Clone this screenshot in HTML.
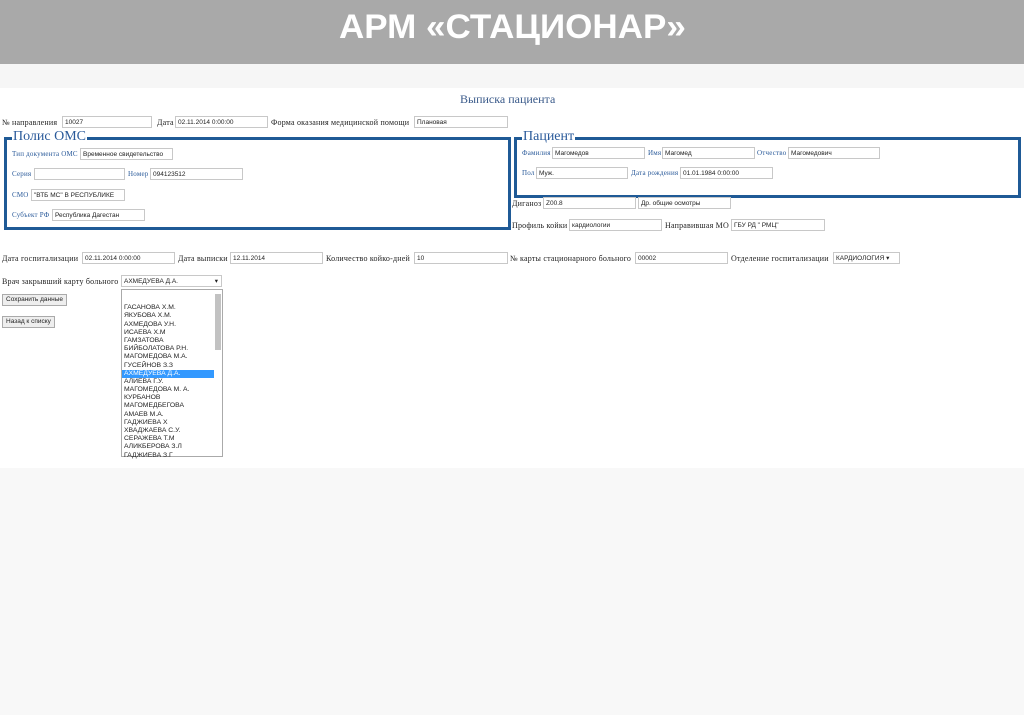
<!DOCTYPE html>
<html><head><meta charset="utf-8"><style>
*{margin:0;padding:0;box-sizing:border-box}
body{width:1024px;height:715px;position:relative;overflow:hidden;background:#f8f8f8;font-family:"Liberation Serif","DejaVu Serif",serif;}
.hdr{position:absolute;left:0;top:0;width:1024px;height:64px;background:#a9a9a9;color:#fff;font-family:"Liberation Sans",sans-serif;font-weight:bold;font-size:34px;text-align:center;line-height:54px;}
.hdr span{display:inline-block;transform:scaleX(1.03)}
.band{position:absolute;left:0;top:64px;width:1024px;height:24px;background:#f6f6f6}
.shot{position:absolute;left:0;top:88px;width:1024px;height:380px;background:#fff}
.a{position:absolute;font-size:8px;letter-spacing:0.2px;color:#222;white-space:nowrap;line-height:9px}
.b{color:#2a5a9a;font-size:7px;letter-spacing:0.2px}
.i{position:absolute;height:12px;border:1px solid #c8c8c8;background:#fff;font-family:"Liberation Sans",sans-serif;font-size:6.5px;line-height:11px;padding-left:2px;color:#222;white-space:nowrap;overflow:hidden}
.fs{position:absolute;border:3px solid #1f5a96}
.lg{position:absolute;background:#fff;font-size:14px;color:#2a5a9a;line-height:14px;padding:0 1px}
.btn{position:absolute;height:12px;border:1px solid #aaa;background:#eee;font-family:"Liberation Sans",sans-serif;font-size:6.5px;line-height:10px;padding:0 3px;color:#222}
.lb{position:absolute;left:121px;top:289px;width:102px;height:168px;border:1px solid #aaa;background:#fff;font-family:"Liberation Sans",sans-serif;font-size:6.8px;color:#222}
.lb div{height:8.2px;line-height:8.2px;padding-left:2px;width:92px}
</style></head><body>
<div class="hdr"><span>АРМ «СТАЦИОНАР»</span></div>
<div class="band"></div>
<div class="shot"></div>
<div class="a" style="left:460px;top:92px;font-size:12px;line-height:14px;letter-spacing:0;color:#3a5a8a">Выписка пациента</div>

<div class="a" style="left:2px;top:118px">№ направления</div><div class="i" style="left:62px;top:116px;width:90px">10027</div>
<div class="a" style="left:157px;top:118px">Дата</div><div class="i" style="left:175px;top:116px;width:93px">02.11.2014 0:00:00</div>
<div class="a" style="left:271px;top:118px">Форма оказания медицинской помощи</div><div class="i" style="left:414px;top:116px;width:94px">Плановая</div>

<div class="fs" style="left:4px;top:137px;width:507px;height:93px"></div>
<div class="lg" style="left:12px;top:130px">Полис ОМС</div>
<div class="a b" style="left:12px;top:150px">Тип документа ОМС</div><div class="i" style="left:80px;top:148px;width:93px">Временное свидетельство</div>
<div class="a b" style="left:12px;top:170px">Серия</div><div class="i" style="left:34px;top:168px;width:91px"></div>
<div class="a b" style="left:128px;top:170px">Номер</div><div class="i" style="left:150px;top:168px;width:93px">094123512</div>
<div class="a b" style="left:12px;top:191px">СМО</div><div class="i" style="left:31px;top:189px;width:94px">"ВТБ МС" В РЕСПУБЛИКЕ</div>
<div class="a b" style="left:12px;top:211px">Субъект РФ</div><div class="i" style="left:52px;top:209px;width:93px">Республика Дагестан</div>

<div class="fs" style="left:514px;top:137px;width:507px;height:61px"></div>
<div class="lg" style="left:522px;top:130px">Пациент</div>
<div class="a b" style="left:522px;top:149px">Фамилия</div><div class="i" style="left:552px;top:147px;width:93px">Магомедов</div>
<div class="a b" style="left:648px;top:149px">Имя</div><div class="i" style="left:662px;top:147px;width:93px">Магомед</div>
<div class="a b" style="left:757px;top:149px">Отчество</div><div class="i" style="left:788px;top:147px;width:92px">Магомедович</div>
<div class="a b" style="left:522px;top:169px">Пол</div><div class="i" style="left:536px;top:167px;width:92px">Муж.</div>
<div class="a b" style="left:631px;top:169px">Дата рождения</div><div class="i" style="left:680px;top:167px;width:93px">01.01.1984 0:00:00</div>

<div class="a" style="left:512px;top:199px">Диганоз</div><div class="i" style="left:543px;top:197px;width:93px">Z00.8</div><div class="i" style="left:638px;top:197px;width:93px">Др. общие осмотры</div>
<div class="a" style="left:512px;top:221px">Профиль койки</div><div class="i" style="left:569px;top:219px;width:93px">кардиологии</div>
<div class="a" style="left:665px;top:221px">Направившая МО</div><div class="i" style="left:731px;top:219px;width:94px">ГБУ РД " РМЦ"</div>

<div class="a" style="left:2px;top:254px">Дата госпитализации</div><div class="i" style="left:82px;top:252px;width:93px">02.11.2014 0:00:00</div>
<div class="a" style="left:178px;top:254px">Дата выписки</div><div class="i" style="left:230px;top:252px;width:93px">12.11.2014</div>
<div class="a" style="left:326px;top:254px">Количество койко-дней</div><div class="i" style="left:414px;top:252px;width:94px">10</div>
<div class="a" style="left:510px;top:254px">№ карты стационарного больного</div><div class="i" style="left:635px;top:252px;width:93px">00002</div>
<div class="a" style="left:731px;top:254px">Отделение госпитализации</div><div class="i" style="left:833px;top:252px;width:67px">КАРДИОЛОГИЯ ▾</div>

<div class="a" style="left:2px;top:277px">Врач закрывший карту больного</div><div class="i" style="left:121px;top:275px;width:101px">АХМЕДУЕВА Д.А.<span style="position:absolute;right:3px">▾</span></div>
<div class="btn" style="left:2px;top:294px">Сохранить данные</div>
<div class="btn" style="left:2px;top:316px">Назад к списку</div>

<div class="lb">
<div style="height:6px"></div>
<div>&nbsp;</div>
<div>ГАСАНОВА Х.М.</div><div>ЯКУБОВА Х.М.</div><div>АХМЕДОВА У.Н.</div><div>ИСАЕВА Х.М</div><div>ГАМЗАТОВА</div><div>БИЙБОЛАТОВА Р.Н.</div><div>МАГОМЕДОВА М.А.</div><div>ГУСЕЙНОВ З.З</div>
<div style="background:#3399ff;color:#fff">АХМЕДУЕВА Д.А.</div>
<div>АЛИЕВА Г.У.</div><div>МАГОМЕДОВА М. А.</div><div>КУРБАНОВ</div><div>МАГОМЕДБЕГОВА</div><div>АМАЕВ М.А.</div><div>ГАДЖИЕВА Х</div><div>ХВАДЖАЕВА С.У.</div><div>СЕРАЖЕВА Т.М</div><div>АЛИКБЕРОВА З.Л</div><div>ГАДЖИЕВА З.Г</div>
<span style="position:absolute;right:1px;top:4px;width:6px;height:56px;background:#c2c2c2"></span>
</div>
</body></html>
